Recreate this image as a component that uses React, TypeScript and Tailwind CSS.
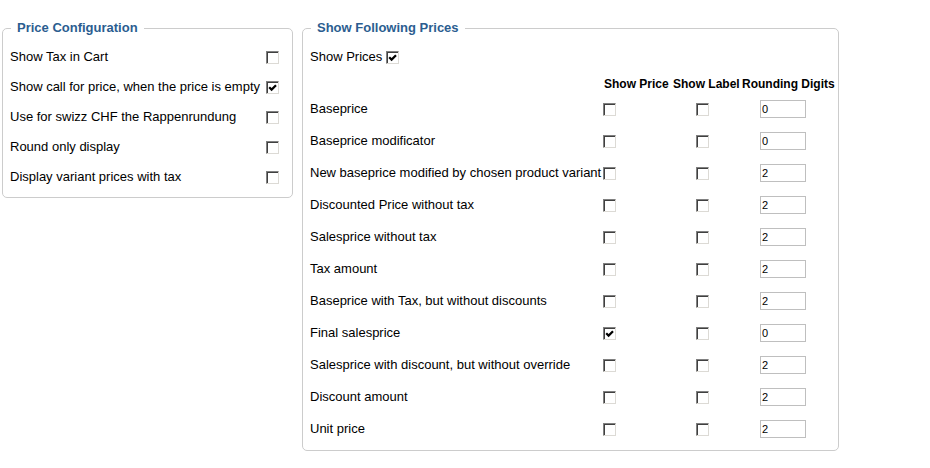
const font = { fontFamily: '"Liberation Sans", Arial, sans-serif' };

function Check({ checked = false }: { checked?: boolean }) {
  return (
    <span className="relative inline-block h-[13px] w-[13px] shrink-0 border border-b-[#dcdad5] border-l-[#808080] border-r-[#dcdad5] border-t-[#808080] bg-white shadow-[inset_1px_1px_0_#404040]">
      {checked && (
        <svg viewBox="0 0 11 11" className="absolute left-0 top-0 h-[11px] w-[11px]">
          <path d="M2.2 5.2 L4.6 7.6 L9 3.2" fill="none" stroke="#000" strokeWidth="2.2" />
        </svg>
      )}
    </span>
  );
}

const configRows = [
  { label: "Show Tax in Cart", checked: false },
  { label: "Show call for price, when the price is empty", checked: true },
  { label: "Use for swizz CHF the Rappenrundung", checked: false },
  { label: "Round only display", checked: false },
  { label: "Display variant prices with tax", checked: false },
];

const priceRows = [
  { label: "Baseprice", show: false, digits: "0" },
  { label: "Baseprice modificator", show: false, digits: "0" },
  { label: "New baseprice modified by chosen product variant", show: false, digits: "2" },
  { label: "Discounted Price without tax", show: false, digits: "2" },
  { label: "Salesprice without tax", show: false, digits: "2" },
  { label: "Tax amount", show: false, digits: "2" },
  { label: "Baseprice with Tax, but without discounts", show: false, digits: "2" },
  { label: "Final salesprice", show: true, digits: "0" },
  { label: "Salesprice with discount, but without override", show: false, digits: "2" },
  { label: "Discount amount", show: false, digits: "2" },
  { label: "Unit price", show: false, digits: "2" },
];

function Legend({ children }: { children: React.ReactNode }) {
  return (
    <legend className="ml-[1px] px-[6px] text-[13px] font-bold leading-[16px] text-[#2b5d90]">
      {children}
    </legend>
  );
}

export default function App() {
  return (
    <div style={font} className="flex h-[468px] w-[930px] items-start gap-[9px] bg-white pl-[2px] pt-[20px] text-[13px] text-black">
      {/* Price Configuration */}
      <fieldset className="w-[291px] rounded-[5px] border border-[#cccccc] pb-[5px] pl-[7px] pr-[13px] pt-[6px]">
        <Legend>Price Configuration</Legend>
        {configRows.map((r) => (
          <div key={r.label} className="flex h-[30px] items-center justify-between">
            <span className="whitespace-nowrap">{r.label}</span>
            <Check checked={r.checked} />
          </div>
        ))}
      </fieldset>

      {/* Show Following Prices */}
      <fieldset className="w-[537px] rounded-[5px] border border-[#cccccc] pb-[5px] pl-[7px] pt-[6px]">
        <Legend>Show Following Prices</Legend>
        <div className="flex h-[30px] items-center gap-[4px]">
          <span>Show Prices</span>
          <Check checked />
        </div>
        <div className="grid h-[21px] grid-cols-[293px_69px_69px_90px] whitespace-nowrap pt-[5px] text-[12px] font-bold leading-[14px]">
          <span />
          <span className="pl-[1px]">Show Price</span>
          <span className="pl-[1px]">Show Label</span>
          <span className="pl-[1px]">Rounding Digits</span>
        </div>
        {priceRows.map((r) => (
          <div key={r.label} className="grid h-[32px] grid-cols-[293px_69px_69px_90px] items-center">
            <span className="whitespace-nowrap">{r.label}</span>
            <span className="flex">
              <Check checked={r.show} />
            </span>
            <span className="flex pl-[24px]">
              <Check />
            </span>
            <span className="flex pl-[19px]">
              <input
                readOnly
                value={r.digits}
                className="h-[18px] w-[46px] border border-[#bfbfbf] px-[1px] text-[11px] leading-[16px] outline-none"
                style={font}
              />
            </span>
          </div>
        ))}
      </fieldset>
    </div>
  );
}
